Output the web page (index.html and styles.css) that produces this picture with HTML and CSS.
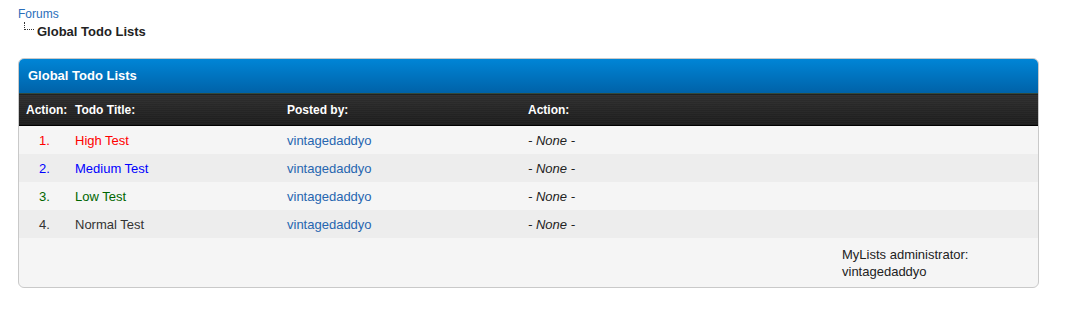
FILE: index.html
```html
<!DOCTYPE html>
<html>
<head>
<meta charset="utf-8">
<link rel="stylesheet" href="styles.css">
</head>
<body>
<div class="page">
  <nav class="crumbs">
    <a class="crumb-link" href="#">Forums</a>
    <div class="crumb-current"><span class="tree"></span><span class="crumb-title">Global Todo Lists</span></div>
  </nav>
  <div class="panel">
    <div class="panel-head">Global Todo Lists</div>
    <table class="todo">
      <colgroup><col class="c1"><col class="c2"><col class="c3"><col class="c4"></colgroup>
      <thead>
        <tr><th class="num">Action:</th><th>Todo Title:</th><th>Posted by:</th><th>Action:</th></tr>
      </thead>
      <tbody>
        <tr class="odd"><td class="num high">1.</td><td class="high">High Test</td><td><a href="#">vintagedaddyo</a></td><td class="none">- None -</td></tr>
        <tr class="even"><td class="num medium">2.</td><td class="medium">Medium Test</td><td><a href="#">vintagedaddyo</a></td><td class="none">- None -</td></tr>
        <tr class="odd"><td class="num low">3.</td><td class="low">Low Test</td><td><a href="#">vintagedaddyo</a></td><td class="none">- None -</td></tr>
        <tr class="even"><td class="num normal">4.</td><td class="normal">Normal Test</td><td><a href="#">vintagedaddyo</a></td><td class="none">- None -</td></tr>
      </tbody>
    </table>
    <div class="panel-foot">
      <div class="admin">MyLists administrator:<br>vintagedaddyo</div>
    </div>
  </div>
</div>
</body>
</html>
```
FILE: styles.css
```css
html, body { margin: 0; padding: 0; background: #fff; }
body { font-family: "Liberation Sans", Arial, sans-serif; font-size: 13px; color: #333; }
.page { padding: 6px 41px 0 18px; }
a { color: #2766b0; text-decoration: none; }
.crumbs { line-height: 16px; }
.crumb-link { font-size: 12px; color: #2a6ebb; display: block; height: 16px; }
.crumb-current { display: flex; align-items: flex-start; height: 19px; }
.tree { width: 9px; height: 7px; margin: 0 3px 0 6px; border-left: 1px dotted #333; border-bottom: 1px dotted #333; }
.crumb-title { font-weight: bold; font-size: 13px; color: #222; line-height: 17px; margin-top: 1px; }
.panel { margin-top: 17px; border: 1px solid #c9c9c9; border-radius: 6px; background: #f5f5f5; overflow: hidden; }
.panel-head { height: 34px; line-height: 34px; padding-left: 9px; color: #fff; font-weight: bold; font-size: 13px;
  background: linear-gradient(#0085d6, #0062a8); }
.todo { width: 100%; border-collapse: collapse; table-layout: fixed; }
.c1 { width: 49px; } .c2 { width: 212px; } .c3 { width: 241px; }
.todo thead tr { border-top: 1px solid #344a3c;
  background:
    repeating-linear-gradient(0deg, rgba(255,255,255,0.025) 0 1px, transparent 1px 2px),
    linear-gradient(#2e2e2e, #1c1c1c); }
.todo th { height: 31px; padding: 0 7px; text-align: left; color: #fff; font-weight: bold; font-size: 12px; border-bottom: 1px solid #000; }
.todo th.num { padding: 0 0 0 7px; }
.todo td { height: 28px; padding: 0 7px; vertical-align: middle; }
.todo td.num { text-align: center; padding: 0 0 0 2px; }
.odd { background: #f5f5f5; }
.even { background: #ededed; }
.high { color: #ff0000; }
.medium { color: #0000ff; }
.low { color: #006600; }
.normal { color: #333; }
.none { font-style: italic; color: #222; }
.panel-foot { height: 49px; display: flex; justify-content: flex-end; padding-top: 8px; box-sizing: border-box; }
.admin { width: 196px; line-height: 17px; font-size: 13px; color: #222; }
```
